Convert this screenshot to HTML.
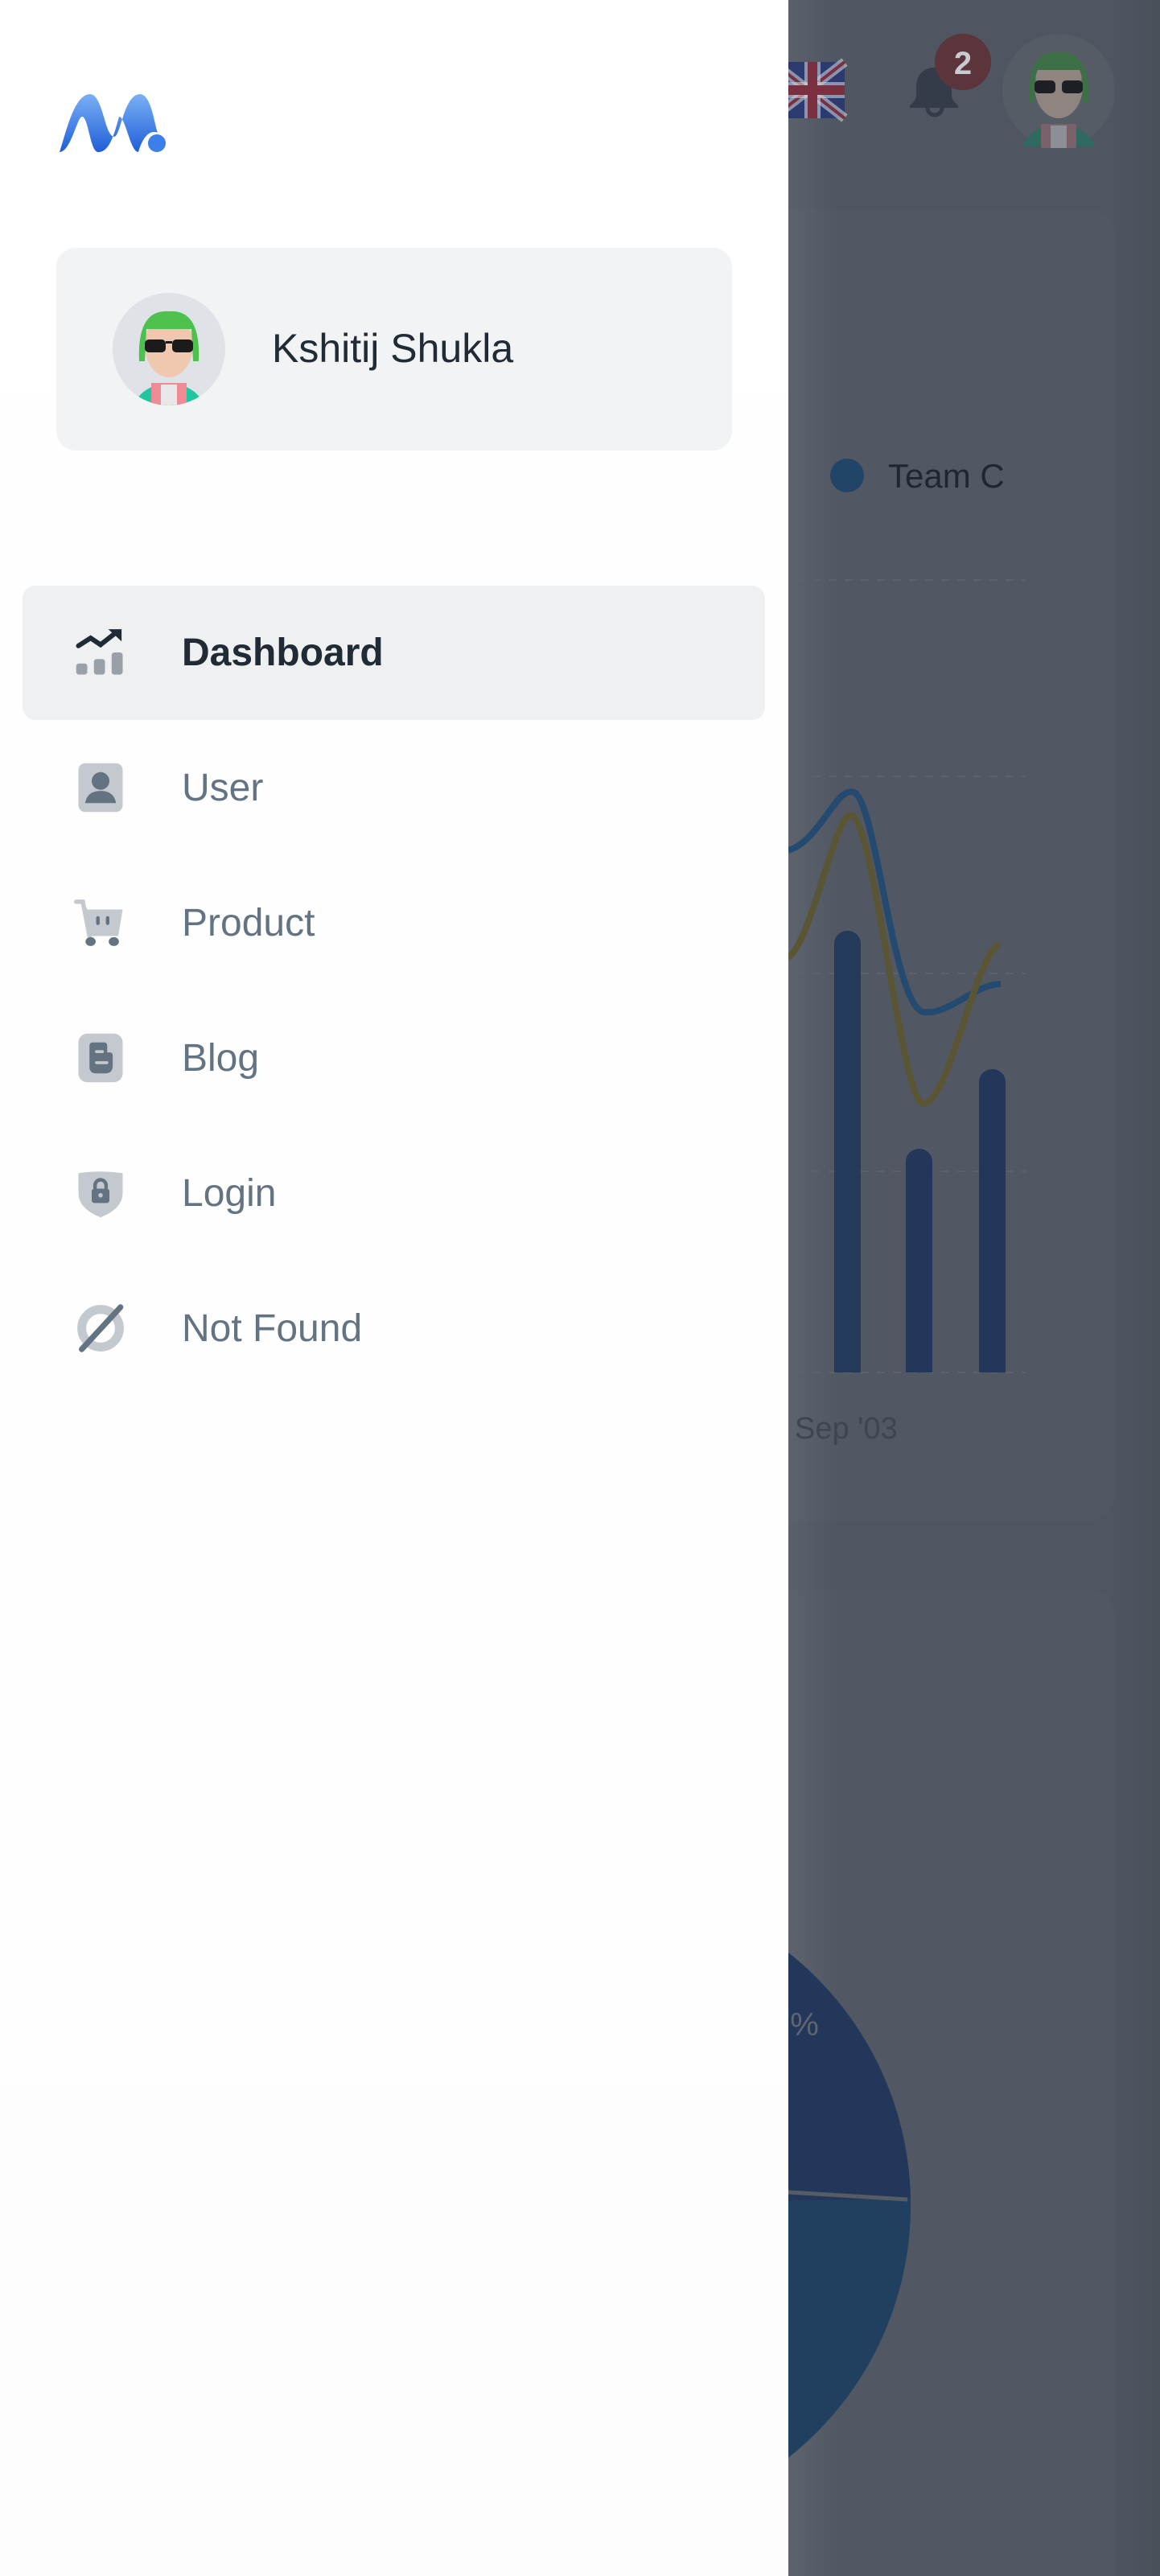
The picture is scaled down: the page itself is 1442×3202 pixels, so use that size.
<!DOCTYPE html>
<html><head><meta charset="utf-8"><style>
html,body{margin:0;padding:0;overflow:hidden;height:3202px}
body{width:1442px;height:3202px;position:relative;overflow:hidden;background:#4e5560;font-family:"Liberation Sans",sans-serif}
.abs{position:absolute}
#drawer{position:absolute;left:0;top:0;width:980px;height:3202px;background:linear-gradient(#fff,#fdfdfd)}
.item{position:absolute;left:28px;width:923px;height:167px;border-radius:16px}
.item .ic{position:absolute;left:64px;top:50px;width:66px;height:66px}
.item .t{position:absolute;left:198px;top:0;line-height:167px;font-size:48px;color:#637381}
</style></head><body>
<div class="abs" style="left:980px;top:0;width:462px;height:3202px;background:linear-gradient(90deg,#5a616b 0,#4f5661 60px,#4f5661 400px,#4a505a 462px)"></div>
<div class="abs" style="left:980px;top:260px;width:405px;height:1630px;border-radius:0 30px 30px 0;background:rgba(255,255,255,0.015)"></div>
<div class="abs" style="left:980px;top:1977px;width:405px;height:1225px;border-radius:0 30px 0 0;background:rgba(255,255,255,0.015)"></div>
<svg class="abs" style="left:0;top:0" width="1442" height="3202">
 <g>
  <rect x="960" y="77" width="90" height="70" rx="8" fill="#2c3a70"/>
  <path d="M960 77L1050 147M1050 77L960 147" stroke="#c9ced8" stroke-width="12" opacity=".6"/>
  <path d="M960 77L1050 147M1050 77L960 147" stroke="#7a3040" stroke-width="4"/>
  <rect x="960" y="102" width="90" height="20" fill="#c9ced8" opacity=".6"/>
  <rect x="1000" y="77" width="20" height="70" fill="#c9ced8" opacity=".6"/>
  <rect x="960" y="106" width="90" height="12" fill="#7a3040"/>
  <rect x="1004" y="77" width="12" height="70" fill="#7a3040"/>
 </g>
 <path d="M1161 84c-14 0-22 11-22 24v10c0 6-4 10-8 13v3h60v-3c-4-3-8-7-8-13v-10c0-13-8-24-22-24z" fill="#333c48"/>
 <circle cx="1162" cy="134" r="9" fill="none" stroke="#333c48" stroke-width="5"/>
 <circle cx="1197" cy="77" r="35" fill="#5c343c"/>
 <text x="1197" y="92" font-size="40" font-weight="bold" fill="#c8cbd0" text-anchor="middle" font-family="Liberation Sans">2</text>
 <circle cx="1316" cy="112" r="70" fill="#555c66"/>
 <g transform="translate(1316,112)">
  <path d="M-45 70 Q-35 45 0 42 Q35 45 45 70Z" fill="#2f6a60"/>
  <rect x="-22" y="42" width="44" height="30" fill="#7a6068"/>
  <rect x="-10" y="44" width="20" height="28" fill="#8c9096"/>
  <ellipse cx="0" cy="-5" rx="30" ry="40" fill="#8f8580"/>
  <path d="M-37 15 Q-40 -50 0 -47 Q40 -50 37 15 L30 15 L28 -25 L-28 -25 L-30 15Z" fill="#3d7046"/>
  <rect x="-30" y="-12" width="26" height="16" rx="5" fill="#1d1f24"/><rect x="4" y="-12" width="26" height="16" rx="5" fill="#1d1f24"/>
 </g>
 <circle cx="1053" cy="591" r="21" fill="#224468"/>
 <text x="1104" y="606" font-size="42" fill="#1f2630" font-family="Liberation Sans">Team C</text>
 <g stroke="#5b626c" stroke-width="2" stroke-dasharray="10 10">
  <line x1="990" y1="721" x2="1275" y2="721"/><line x1="990" y1="965" x2="1275" y2="965"/>
  <line x1="990" y1="1210" x2="1275" y2="1210"/><line x1="990" y1="1456" x2="1275" y2="1456"/>
  <line x1="990" y1="1706" x2="1275" y2="1706"/>
 </g>
 <rect x="1037" y="1157" width="33" height="549" rx="16" fill="#233a5a"/><rect x="1037" y="1180" width="33" height="526" fill="#233a5a"/>
 <rect x="1126" y="1428" width="33" height="278" rx="16" fill="#22375a"/><rect x="1126" y="1450" width="33" height="256" fill="#22375a"/>
 <rect x="1217" y="1329" width="33" height="377" rx="16" fill="#22375a"/><rect x="1217" y="1350" width="33" height="356" fill="#22375a"/>
 <path d="M980 1057C1020 1045 1040 975 1062 985C1090 1000 1110 1250 1148 1258C1180 1262 1210 1224 1244 1223" fill="none" stroke="#254a70" stroke-width="8"/>
 <path d="M980 1190C1010 1170 1040 1000 1060 1014C1090 1040 1120 1370 1148 1372C1180 1372 1215 1175 1244 1174" fill="none" stroke="#5a5535" stroke-width="8"/>
 <text x="988" y="1788" font-size="38" fill="#3d4550" font-family="Liberation Sans">Sep '03</text>
 <path d="M732 2741L732 2341A400 400 0 0 1 1132 2733Z" fill="#22375a"/>
 <path d="M732 2741L1132 2733A400 400 0 0 1 732 3141Z" fill="#21405f"/>
 <line x1="900" y1="2720" x2="1128" y2="2734" stroke="#555c66" stroke-width="5"/>
 <text x="960" y="2530" font-size="40" fill="#5f6670" font-family="Liberation Sans">7%</text>
</svg>

<div id="drawer">
 <svg class="abs" style="left:72px;top:115px" width="140" height="78" viewBox="0 0 140 78">
  <defs><linearGradient id="lg" x1="0" y1="0" x2="0" y2="1"><stop offset="0" stop-color="#7ab0f5"/><stop offset="1" stop-color="#1f5fd8"/></linearGradient></defs>
  <path d="M2 74C10 50 20 2 40 2C56 2 58 55 70 55C78 55 82 2 102 2C116 2 120 40 124 50C112 45 104 60 100 74C90 74 84 30 76 30C68 60 62 74 50 74C40 74 38 30 30 30C24 30 16 74 2 74Z" fill="url(#lg)"/>
  <circle cx="123" cy="63" r="11" fill="#3d7fe8"/>
 </svg>
 <div class="abs" style="left:70px;top:308px;width:840px;height:252px;border-radius:24px;background:#f2f3f5"></div>
 <svg class="abs" style="left:140px;top:364px" width="140" height="140" viewBox="-70 -70 140 140">
  <defs><clipPath id="cc"><circle r="70"/></clipPath></defs>
  <circle r="70" fill="#dfe3e8"/>
  <g clip-path="url(#cc)">
   <path d="M-45 72 Q-35 45 0 42 Q35 45 45 72Z" fill="#1fc7a0"/>
   <rect x="-22" y="42" width="44" height="30" fill="#f08a94"/>
   <rect x="-10" y="44" width="20" height="28" fill="#e8e8e8"/>
   <ellipse cx="0" cy="-5" rx="30" ry="40" fill="#f0c8b0"/>
   <path d="M-37 15 Q-40 -50 0 -47 Q40 -50 37 15 L30 15 L28 -25 L-28 -25 L-30 15Z" fill="#4ec04e"/>
   <rect x="-30" y="-12" width="26" height="16" rx="5" fill="#1b1b1b"/><rect x="4" y="-12" width="26" height="16" rx="5" fill="#1b1b1b"/>
   <rect x="-4" y="-10" width="8" height="3" fill="#1b1b1b"/>
  </g>
 </svg>
 <div class="abs" style="left:338px;top:403px;font-size:50px;color:#212b36;line-height:60px">Kshitij Shukla</div>

 <div class="item" style="top:728px;background:#eff0f2">
  <svg class="ic" viewBox="0 0 24 24"><rect x="1" y="17" width="5" height="5" rx="1.2" fill="#9aa0a8"/><rect x="9" y="15" width="5" height="7" rx="1.2" fill="#9aa0a8"/><rect x="17" y="12" width="5" height="10" rx="1.2" fill="#9aa0a8"/><path d="M2 9L7.5 5.5L12 8.5L19 3" fill="none" stroke="#212b36" stroke-width="2.2" stroke-linecap="round"/><path d="M15.5 1.5H21.5V7Z" fill="#212b36"/></svg>
  <div class="t" style="color:#212b36;font-weight:bold">Dashboard</div>
 </div>
 <div class="item" style="top:896px">
  <svg class="ic" viewBox="0 0 24 24"><rect x="2" y="1" width="20" height="22" rx="3" fill="#c4c9cf"/><circle cx="12" cy="9" r="4" fill="#637381"/><path d="M5 19Q6 13.5 12 13.5Q18 13.5 19 19Z" fill="#637381"/></svg>
  <div class="t">User</div>
 </div>
 <div class="item" style="top:1064px">
  <svg class="ic" viewBox="0 0 24 24"><path d="M1 2H4L6 6H22L20 18H7L4.5 3" fill="#c4c9cf"/><path d="M1 2.5H4L7 18" fill="none" stroke="#c4c9cf" stroke-width="2" stroke-linecap="round"/><rect x="10" y="9" width="1.6" height="4" rx=".8" fill="#637381"/><rect x="14.4" y="9" width="1.6" height="4" rx=".8" fill="#637381"/><ellipse cx="7.5" cy="20.5" rx="2.3" ry="2" fill="#637381"/><ellipse cx="18" cy="20.5" rx="2.3" ry="2" fill="#637381"/></svg>
  <div class="t">Product</div>
 </div>
 <div class="item" style="top:1232px">
  <svg class="ic" viewBox="0 0 24 24"><rect x="2" y="1" width="20" height="22" rx="4" fill="#c4c9cf"/><path d="M7 6.5Q7 5 8.5 5H13.5Q15 5 15 6.5V9.5H16Q17.5 9.5 17.5 11V15.5Q17.5 19 14 19H10Q7 19 7 16Z" fill="#637381"/><rect x="9.5" y="8.5" width="4" height="1.3" rx=".6" fill="#c4c9cf"/><rect x="9.5" y="13.5" width="6" height="1.3" rx=".6" fill="#c4c9cf"/></svg>
  <div class="t">Blog</div>
 </div>
 <div class="item" style="top:1400px">
  <svg class="ic" viewBox="0 0 24 24"><path d="M2 3Q12 1.5 22 3V12Q22 19 12 23Q2 19 2 12Z" fill="#c4c9cf"/><path d="M9.5 10V8.5a2.5 2.5 0 0 1 5 0V10" fill="none" stroke="#637381" stroke-width="1.6"/><rect x="8" y="10" width="8" height="6.5" rx="1.2" fill="#637381"/><circle cx="12" cy="13" r="1" fill="#c4c9cf"/></svg>
  <div class="t">Login</div>
 </div>
 <div class="item" style="top:1568px">
  <svg class="ic" viewBox="0 0 24 24"><circle cx="12" cy="12" r="8.5" fill="none" stroke="#c4c9cf" stroke-width="4"/><path d="M3.5 21.5L21 2.5" stroke="#637381" stroke-width="2.6" stroke-linecap="round"/></svg>
  <div class="t">Not Found</div>
 </div>
</div>
</body></html>
